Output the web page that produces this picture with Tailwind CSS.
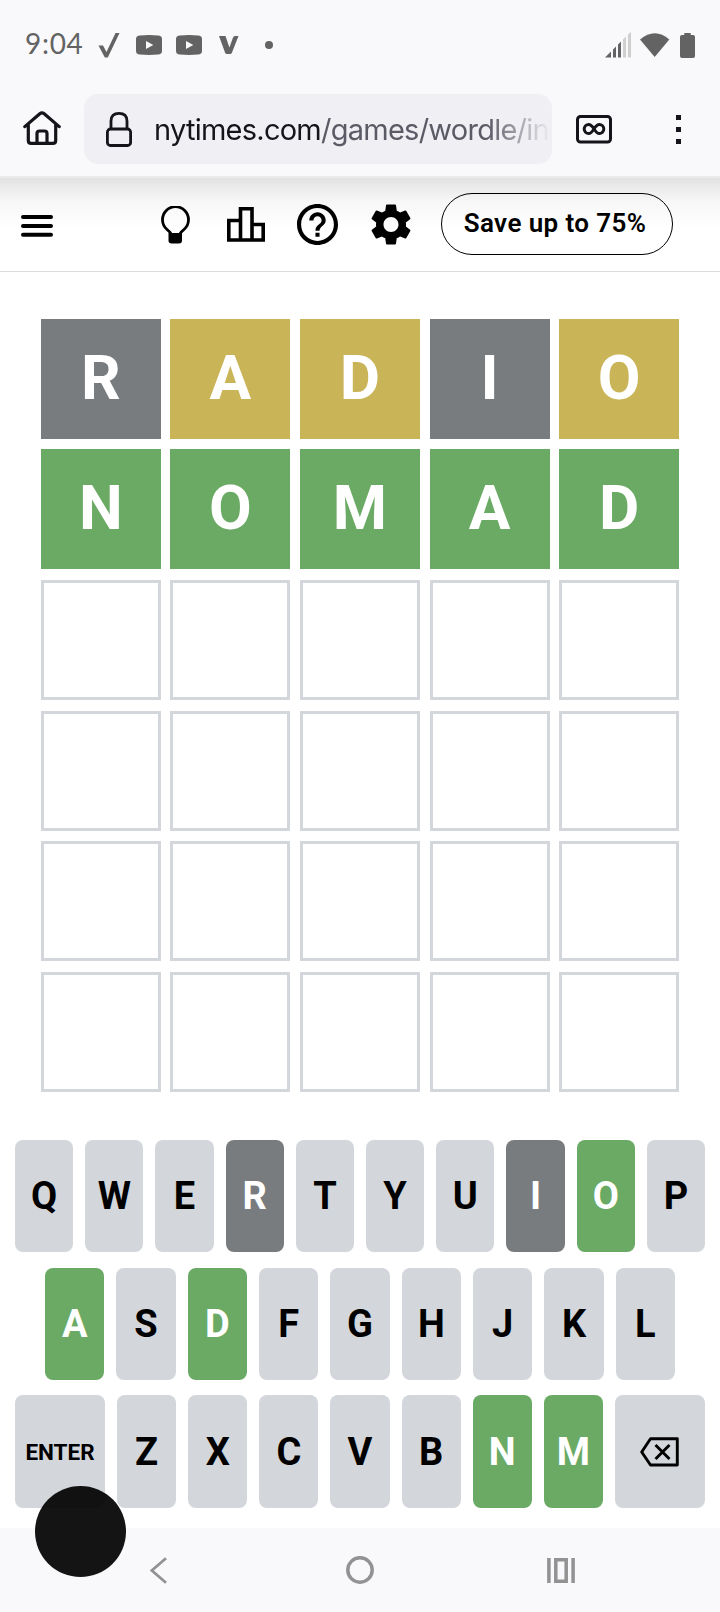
<!DOCTYPE html>
<html lang="en" class="bg-white">
  <head>
    <meta charset="UTF-8" />
    <meta name="viewport" content="width=device-width, initial-scale=1.0" />
    <title>Wordle</title>
    <script src="https://cdn.jsdelivr.net/npm/@tailwindcss/browser@4"></script>
  </head>

  <body class="relative flex flex-col w-[720px] h-[1612px] overflow-hidden bg-white text-black font-['Roboto',sans-serif]">
    <!-- Status bar -->
    <div class="flex items-center h-[90px] pl-[25px] pr-[25px] bg-[#f9f9fb] text-[#636363] shrink-0">
      <span class="w-[73px] pb-1 text-[28px] leading-none font-['Lato',sans-serif] tracking-[0.7px]">9:04</span>
      <svg class="w-[22px] h-[26px]" viewBox="0 0 22 26" fill="currentColor"><path d="M0.5 13.5H5L8.5 20 17.5 1H21.5L9.8 25.5H6.8Z" /></svg>
      <svg class="w-[26px] h-5 ml-4" viewBox="0 0 26 20" fill="currentColor"><path fill-rule="evenodd" d="M4 .5Q13-.3 22 .5Q26 .6 26 4V16Q26 19.4 22 19.5Q13 20.3 4 19.5Q0 19.4 0 16V4Q0 .6 4 .5ZM10 6V14L17.3 10Z" /></svg>
      <svg class="w-[26px] h-5 ml-3.5" viewBox="0 0 26 20" fill="currentColor"><path fill-rule="evenodd" d="M4 .5Q13-.3 22 .5Q26 .6 26 4V16Q26 19.4 22 19.5Q13 20.3 4 19.5Q0 19.4 0 16V4Q0 .6 4 .5ZM10 6V14L17.3 10Z" /></svg>
      <svg class="w-5 h-[18px] ml-[17px]" viewBox="0 0 20 18" fill="currentColor"><path d="M0 0H6.5L10.4 11.5L14 1.5Q14.6 0 16 0H19.5L13 16.5Q12.4 18 11 18H8Q6.6 18 6 16.5Z" /></svg>
      <span class="size-2 ml-[26px] rounded-full bg-[#636363]"></span>
      <svg class="w-[26px] h-[26px] ml-auto" viewBox="0 0 26 26" fill="currentColor">
        <path d="M0 25.5L6 19.5V25.5ZM8 17.5L11 14.5V25.5H8ZM13 12.5L16 9.5V25.5H13Z" />
        <path fill="#cfcfd0" d="M18 7.5L21 4.5V25.5H18ZM23 2.5L26 0V25.5H23Z" />
      </svg>
      <svg class="w-[30px] h-6 ml-[9px]" viewBox="0 0 30 24" fill="currentColor"><path d="M0 6.5Q15-6 29.3 6.5L14.7 24Z" /></svg>
      <svg class="w-[15px] h-[25px] ml-[10px]" viewBox="0 0 15 25" fill="currentColor"><path d="M4.3 0H10.7V2H13Q15 2 15 4V23Q15 25 13 25H2Q0 25 0 23V4Q0 2 2 2H4.3Z" /></svg>
    </div>

    <!-- Browser toolbar -->
    <div class="flex items-start h-[86px] pt-1 pl-[23px] bg-[#f9f9fb] text-[#15141a] shrink-0">
      <svg class="w-[38px] h-[35px] mt-[17px]" viewBox="0 0 38 35" fill="none" stroke="currentColor" stroke-width="3.2" stroke-linecap="round" stroke-linejoin="round">
        <path d="M1.8 15.6L16.8 2.7Q19 1 21.2 2.7L36.2 15.6M5.3 13.5V29.5Q5.3 32.4 8.2 32.4H29.8Q32.7 32.4 32.7 29.5V13.5M14 32V22.5Q14 20 16.5 20H21.5Q24 20 24 22.5V32" />
      </svg>
      <div class="flex w-[468px] h-[70px] ml-[23px] pl-[22px] rounded-[14px] bg-[#f0eff4] overflow-hidden">
        <svg class="w-[26px] h-9 mt-[18px] shrink-0" viewBox="0 0 26 36" fill="none" stroke="currentColor" stroke-width="2.8">
          <rect x="1.4" y="17" width="23.2" height="16.5" rx="3" />
          <path d="M5 17V9Q5 1.4 13 1.4Q21 1.4 21 9V17" />
        </svg>
        <div class="w-[397px] ml-[22px] pt-0.5 overflow-hidden whitespace-nowrap text-[29px] leading-[68px] tracking-[-0.75px] font-['Inter',sans-serif] text-[#5b5b66] mask-r-from-[84%] mask-r-to-100%"><span class="text-[#15141a]">nytimes.com</span>/games/wordle/ind</div>
      </div>
      <svg class="w-9 h-[29px] ml-6 mt-[21px]" viewBox="0 0 36 29" fill="none" stroke="currentColor" stroke-width="3">
        <rect x="1.5" y="1.5" width="33" height="25.5" rx="3" />
        <path d="M18 14C16 11 14.7 9.6 12.7 9.6A4.5 4.5 0 0 0 12.7 18.6C14.7 18.6 16 17 18 14C20 11 21.3 9.6 23.3 9.6A4.5 4.5 0 0 1 23.3 18.6C21.3 18.6 20 17 18 14Z" />
      </svg>
      <div class="flex flex-col gap-[7px] ml-16 mt-[21px]">
        <span class="size-[5px] bg-[#15141a]"></span>
        <span class="size-[5px] bg-[#15141a]"></span>
        <span class="size-[5px] bg-[#15141a]"></span>
      </div>
    </div>

    <!-- Game header -->
    <header class="flex items-center h-24 pl-[21px] border-t-2 border-t-[#ebebeb] border-b border-b-[#dcdcdc] bg-linear-to-b from-[#e2e2e2] via-[#f7f7f7] via-25% to-white to-55% shrink-0">
      <svg class="w-8 h-[22px] mt-0.5" viewBox="0 0 32 22" stroke="currentColor" stroke-width="4" stroke-linecap="round"><path d="M2 2H30M2 11H30M2 19.7H30" /></svg>
      <svg class="w-[29px] h-[38px] ml-[108px]" viewBox="0 0 29 38">
        <path d="M9.5 28.5V27Q9 26 6 23.5A13 13 0 1 1 23 23.5Q20 26 19.5 27V28.5" fill="none" stroke="currentColor" stroke-width="2.8" />
        <path d="M7.5 27H21V34.5Q21 37.5 18 37.5H10.500Q7.5 37.5 7.5 34.5Z" fill="currentColor" />
      </svg>
      <svg class="w-[38px] h-[35px] ml-[37px]" viewBox="0 0 38 35" fill="none" stroke="currentColor" stroke-width="3.6"><path d="M1.8 13.5H13.5V33H1.8ZM13.5 1.8H25V33H13.5ZM25 17.5H36.2V33H25Z" /></svg>
      <svg class="w-[41px] h-[41px] ml-8" viewBox="2 2 20 20" fill="currentColor"><path d="M11 18h2v-2h-2v2zm1-16C6.48 2 2 6.48 2 12s4.48 10 10 10 10-4.48 10-10S17.52 2 12 2zm0 18c-4.41 0-8-3.59-8-8s3.59-8 8-8 8 3.59 8 8-3.59 8-8 8zm0-14c-2.21 0-4 1.79-4 4h2c0-1.1.9-2 2-2s2 .9 2 2c0 2-3 1.75-3 5h2c0-2.25 3-2.5 3-5 0-2.21-1.79-4-4-4z" /></svg>
      <svg class="w-10 h-[41px] ml-[33px]" viewBox="2.4 2.2 19.2 19.6" fill="currentColor"><path d="M19.14,12.94c0.04-0.3,0.06-0.61,0.06-0.94c0-0.32-0.02-0.64-0.07-0.94l2.03-1.58c0.18-0.14,0.23-0.41,0.12-0.61l-1.92-3.32c-0.12-0.22-0.37-0.29-0.59-0.22l-2.39,0.96c-0.5-0.38-1.03-0.7-1.62-0.94L14.4,2.81c-0.04-0.24-0.24-0.41-0.48-0.41h-3.84c-0.24,0-0.43,0.17-0.47,0.41L9.25,5.35C8.66,5.59,8.12,5.92,7.63,6.29L5.24,5.33c-0.22-0.08-0.47,0-0.59,0.22L2.74,8.87C2.62,9.08,2.66,9.34,2.86,9.48l2.03,1.58C4.84,11.36,4.8,11.69,4.8,12s0.02,0.64,0.07,0.94l-2.03,1.58c-0.18,0.14-0.23,0.41-0.12,0.61l1.92,3.32c0.12,0.22,0.37,0.29,0.59,0.22l2.39-0.96c0.5,0.38,1.03,0.7,1.62,0.94l0.36,2.54c0.05,0.24,0.24,0.41,0.48,0.41h3.84c0.24,0,0.44-0.17,0.47-0.41l0.36-2.54c0.59-0.24,1.13-0.56,1.62-0.94l2.39,0.96c0.22,0.08,0.47,0,0.59-0.22l1.92-3.32c0.12-0.22,0.07-0.47-0.12-0.61L19.14,12.94z M12,15.6c-1.98,0-3.6-1.62-3.6-3.6s1.62-3.6,3.6-3.6s3.6,1.62,3.6,3.6S13.98,15.6,12,15.6z" /></svg>
      <button class="w-[232px] h-[62px] ml-[30px] mb-px pb-0.5 pr-1 rounded-full border border-black text-[26px] font-semibold leading-none tracking-[0.4px] whitespace-nowrap">Save up to 75%</button>
    </header>

    <!-- Board -->
    <main id="board" class="grid grid-cols-[repeat(5,120px)] auto-rows-[120px] gap-x-[9.6px] gap-y-[10.7px] mt-[46.5px] ml-[40.8px] shrink-0"></main>

    <!-- Keyboard -->
    <div id="keyboard" class="flex flex-col gap-[15.2px] mt-12 px-[15px] shrink-0"></div>

    <!-- Navigation bar -->
    <nav class="flex items-center h-[84px] mt-auto pl-[150px] pr-[145px] justify-between bg-[#f9f9fb] text-[#929292] shrink-0">
      <svg class="w-[17px] h-[27px]" viewBox="0 0 17 27" fill="none" stroke="currentColor" stroke-width="2.8"><path d="M16 1.3L1.8 13.5L16 25.7" /></svg>
      <svg class="size-7 ml-[5px]" viewBox="0 0 28 28" fill="none" stroke="currentColor" stroke-width="3.5"><circle cx="14" cy="14" r="12.2" /></svg>
      <svg class="w-7 h-[25px]" viewBox="0 0 28 25" fill="none" stroke="currentColor" stroke-width="3.5"><path d="M1.9 0V25M26.1 0V25M8.8 1.8H19.2V23.2H8.8Z" /></svg>
    </nav>

    <!-- Floating touch button -->
    <div class="absolute left-[35px] top-[1486px] size-[91px] rounded-full bg-black/92"></div>

    <script>
      const guesses = ["RADIO", "NOMAD"];
      const marks = [
        ["absent", "present", "present", "absent", "present"],
        ["correct", "correct", "correct", "correct", "correct"],
      ];
      const colors = {
        absent: "bg-[#787c7e] text-white",
        present: "bg-[#c9b458] text-white",
        correct: "bg-[#6aaa64] text-white",
      };

      const board = document.getElementById("board");
      for (let row = 0; row < 6; row++) {
        for (let col = 0; col < 5; col++) {
          const tile = document.createElement("div");
          tile.className = guesses[row]
            ? `flex items-center justify-center pb-0.5 text-[62px] leading-none font-bold ${colors[marks[row][col]]}`
            : "border-3 border-[#d3d6da]";
          tile.textContent = guesses[row] ? guesses[row][col] : "";
          board.appendChild(tile);
        }
      }

      const used = { R: "absent", I: "absent", O: "correct", A: "correct", D: "correct", N: "correct", M: "correct" };
      const backspace = `
        <svg class="w-[39px] h-[30px]" viewBox="0 0 39 30" fill="none" stroke="currentColor" stroke-width="2.9" stroke-linejoin="round">
          <path d="M10.5 1.7H37.3V28H10.5L1.7 15Z" />
          <path d="M15.5 8L29.5 22M29.5 8L15.5 22" />
        </svg>`;

      const keyboard = document.getElementById("keyboard");
      [[..."QWERTYUIOP"], [..."ASDFGHJKL"], ["ENTER", ..."ZXCVBNM", "BACK"]].forEach((keys, i) => {
        const row = document.createElement("div");
        row.className = `flex gap-3 ${i === 1 ? "px-[30px]" : ""}`;
        keys.forEach((key) => {
          const button = document.createElement("button");
          const size = key.length > 1 ? "w-[90px] shrink-0 text-[22.5px] pt-px" : "flex-1 text-[38px]";
          button.className = `flex items-center justify-center h-[112.5px] rounded-lg leading-none font-bold ${size} ${colors[used[key]] || "bg-[#d3d6da]"}`;
          button.innerHTML = key === "BACK" ? backspace : key;
          row.appendChild(button);
        });
        keyboard.appendChild(row);
      });
    </script>
  </body>
</html>
